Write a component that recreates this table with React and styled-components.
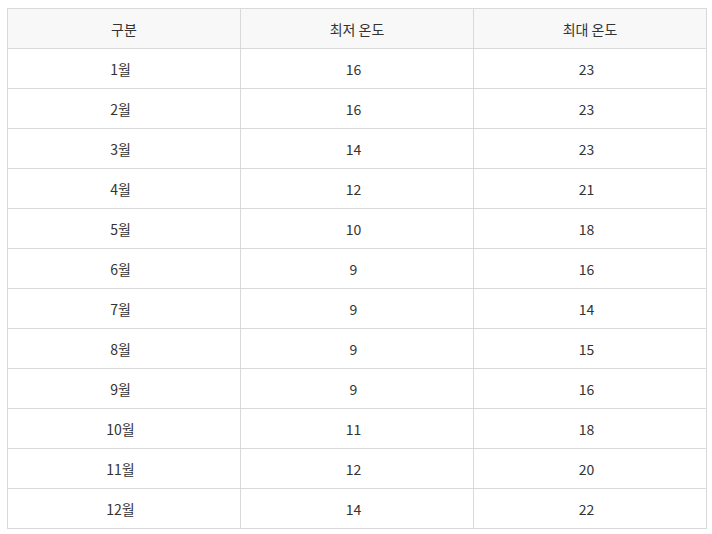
import React from "react"
import styled, { createGlobalStyle } from "styled-components"

const GlobalStyle = createGlobalStyle`
  body {
    margin: 0;
    background: #fff;
    font-family: "Noto Sans CJK KR", "Noto Sans", sans-serif;
  }
`

const Wrap = styled.div`
  padding: 8px 0 0 7px;
`

const Table = styled.table`
  width: 700px;
  border-collapse: separate;
  border-spacing: 0;
  border-top: 1px solid #d9d9d9;
  border-left: 1px solid #d9d9d9;
  table-layout: fixed;
  color: #333;
  font-size: 14px;
`

const Cell = styled.td`
  height: 39px;
  padding: ${p => (p.$head ? "0" : "0 7px 0 0")};
  text-align: center;
  vertical-align: middle;
  border-right: 1px solid #d9d9d9;
  border-bottom: 1px solid #d9d9d9;
  background: ${p => (p.$head ? "#f8f8f8" : "#fff")};
  font-weight: normal;
`

const rows = [
  ["1월", 16, 23],
  ["2월", 16, 23],
  ["3월", 14, 23],
  ["4월", 12, 21],
  ["5월", 10, 18],
  ["6월", 9, 16],
  ["7월", 9, 14],
  ["8월", 9, 15],
  ["9월", 9, 16],
  ["10월", 11, 18],
  ["11월", 12, 20],
  ["12월", 14, 22],
]

export default function App() {
  return (
    <Wrap>
      <GlobalStyle />
      <Table>
        <thead>
          <tr>
            <Cell as="th" $head>구분</Cell>
            <Cell as="th" $head>최저 온도</Cell>
            <Cell as="th" $head>최대 온도</Cell>
          </tr>
        </thead>
        <tbody>
          {rows.map(r => (
            <tr key={r[0]}>
              {r.map((v, i) => (
                <Cell key={i}>{v}</Cell>
              ))}
            </tr>
          ))}
        </tbody>
      </Table>
    </Wrap>
  )
}
